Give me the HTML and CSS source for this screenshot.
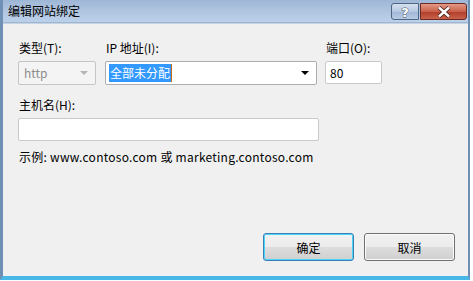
FILE: index.html
```html
<!DOCTYPE html>
<html lang="zh-CN">
<head>
<meta charset="utf-8">
<title>编辑网站绑定</title>
<link rel="stylesheet" href="styles.css">
</head>
<body>
<div class="window">
  <div class="titlebar">
    <span class="title">编辑网站绑定</span>
    <div class="caption-buttons">
      <button class="cap cap-help" aria-label="帮助">
        <svg width="14" height="12" viewBox="0 0 14 12"><text x="7" y="10.5" text-anchor="middle" class="cap-glyph">?</text></svg>
      </button>
      <button class="cap cap-close" aria-label="关闭">
        <svg width="16" height="12" viewBox="0 0 16 12"><path d="M3 1.5 L13 10.5 M13 1.5 L3 10.5" stroke="#3a1a1a" stroke-width="4" stroke-linecap="butt"/><path d="M3 1.5 L13 10.5 M13 1.5 L3 10.5" stroke="#ffffff" stroke-width="2.4"/></svg>
      </button>
    </div>
  </div>
  <div class="client">
    <div class="row-top">
      <div class="field f-type">
        <label class="lbl">类型(T):</label>
        <div class="combo disabled"><span class="combo-text">http</span><span class="arrow arrow-dis"></span></div>
      </div>
      <div class="field f-ip">
        <label class="lbl">IP 地址(I):</label>
        <div class="combo"><span class="combo-text"><span class="sel">全部未分配</span><span class="caret"></span></span><span class="arrow"></span></div>
      </div>
      <div class="field f-port">
        <label class="lbl">端口(O):</label>
        <div class="textbox port">80</div>
      </div>
    </div>
    <div class="field f-host">
      <label class="lbl">主机名(H):</label>
      <div class="textbox host"></div>
    </div>
    <p class="example">示例: www.contoso.com 或 marketing.contoso.com</p>
    <div class="buttons">
      <button class="btn btn-default">确定</button>
      <button class="btn">取消</button>
    </div>
  </div>
</div>
</body>
</html>
```
FILE: styles.css
```css
* { box-sizing: border-box; }
html, body { margin: 0; padding: 0; background: #ffffff; }
body { width: 473px; height: 281px; overflow: hidden; font-family: "Noto Sans CJK SC", "Noto Sans", sans-serif; font-size: 12px; color: #000; }

.window {
  width: 470px; height: 280px;
  display: flex; flex-direction: column;
  background: #b9d1ea;
  border-left: 3px solid #6f8fb4;
  border-right: 2px solid #6f8fb4;
  border-bottom: 4px solid #47b8e8;
  box-shadow: inset 0 -1px 0 #2a6f96;
}
.titlebar {
  height: 23px; flex: none;
  display: flex; align-items: center; justify-content: space-between;
  background: linear-gradient(to bottom, #9fb7d6 0%, #afc5e0 50%, #bcd0ea 100%);
  padding-left: 5px;
  border-bottom: 1px solid #9fb5d0;
}
.title { font-size: 12px; line-height: 16px; color: #000; }
.caption-buttons { display: flex; align-self: flex-start; margin-top: 3px; margin-right: 1px; }
.cap {
  height: 17px; padding: 0; margin: 0;
  display: flex; align-items: center; justify-content: center;
  border: 1px solid #4e6584; border-radius: 3px;
}
.cap-help { width: 28px; margin-right: 1px; background: linear-gradient(to bottom, #d4e0ef 0%, #b6c9e2 50%, #9fb6d6 51%, #b7cbe4 100%); border-radius: 3px 0 0 3px; }
.cap-close { width: 47px; background: linear-gradient(to bottom, #e59a88 0%, #c9604b 50%, #b03d28 51%, #c9624b 100%); border-color: #6b2a22; border-radius: 0 3px 3px 0; }
.cap-glyph { font-family: "DejaVu Sans", sans-serif; font-weight: bold; font-size: 13px; fill: #fff; stroke: #3c4a5e; stroke-width: 0.8; paint-order: stroke; }

.client {
  flex: 1;
  background: #f0f0f0;
  padding: 16px 0 0 15px;
  display: flex; flex-direction: column;
  border-top: 1px solid #c6d3e3;
}
.row-top { display: flex; gap: 9px; }
.field { display: flex; flex-direction: column; }
.lbl { line-height: 16px; height: 16px; margin-bottom: 5px; padding-left: 1px; }
.f-type { width: 78px; }
.f-ip { width: 212px; }
.f-port { width: 57px; margin-left: -1px; }

.combo {
  height: 24px; border: 1px solid #abadb3; border-radius: 2px; background: #fff;
  display: flex; align-items: center; justify-content: space-between;
  padding: 0 7px 0 3px;
}
.combo.disabled { background: #f4f4f4; border-color: #c5c5c5; color: #8d8d8d; }
.combo-text { display: flex; align-items: center; line-height: 18px; }
.combo.disabled .combo-text { padding-left: 2px; }
.sel { background: #3399ff; color: #fff; line-height: 18px; padding: 0 1px; }
.caret { width: 1px; height: 18px; background: #c86a1e; }
.arrow { width: 0; height: 0; border-left: 4px solid transparent; border-right: 4px solid transparent; border-top: 4px solid #000; }
.arrow-dis { border-top-color: #b5b5b5; }

.textbox { background: #fff; border: 1px solid #abadb3; border-radius: 2px; }
.port { height: 23px; line-height: 21px; padding-left: 4px; border-color: #c8cacf; }
.f-host { margin-top: 12px; width: 301px; }
.host { height: 23px; border-color: #c8cacf; }
.example { margin: 7px 0 0 1px; line-height: 18px; font-size: 12px; letter-spacing: 0.25px; }

.buttons { margin-top: auto; margin-bottom: 15px; display: flex; gap: 10px; padding-left: 245px; }
.btn {
  width: 91px; height: 28px; padding: 0;
  font-family: "Noto Sans CJK SC", sans-serif; font-size: 12px; color: #000;
  border: 1px solid #707070; border-radius: 3px;
  background: linear-gradient(to bottom, #f2f2f2 0%, #ebebeb 50%, #dddddd 51%, #cfcfcf 100%);
  box-shadow: inset 0 0 0 1px #fbfbfb;
}
.btn-default { border-color: #3c7fb1; box-shadow: inset 0 0 0 1px #48d4ff; }
```
